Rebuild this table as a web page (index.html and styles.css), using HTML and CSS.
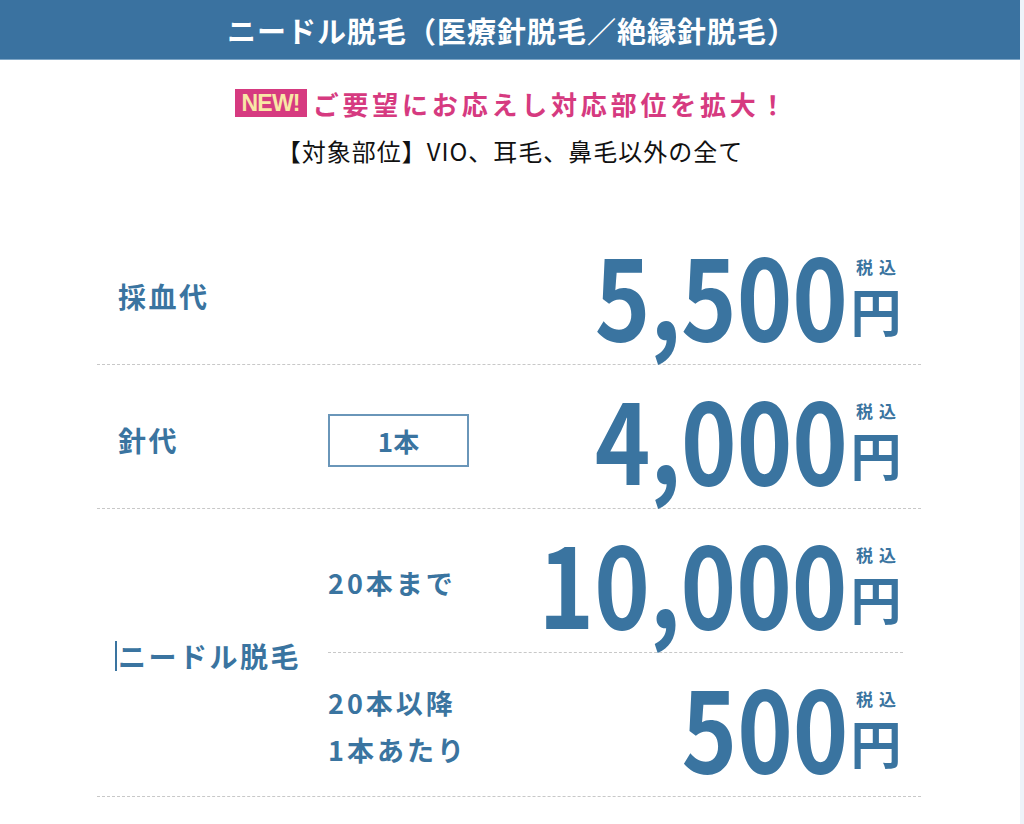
FILE: index.html
```html
<!DOCTYPE html>
<html lang="ja">
<head>
<meta charset="utf-8">
<link rel="stylesheet" href="styles.css">
</head>
<body>
<div class="page">
  <header class="title">ニードル脱毛（医療針脱毛／絶縁針脱毛）</header>
  <div class="intro">
    <p class="news"><span class="badge">NEW!</span><span class="news-text">ご要望にお応えし対応部位を拡大！</span></p>
    <p class="target">【対象部位】VIO、耳毛、鼻毛以外の全て</p>
  </div>
  <div class="table">
    <div class="row">
      <div class="label">採血代</div>
      <div class="cell">
        <div class="mid"></div>
        <div class="price"><span class="num">5,500</span><span class="unit"><span class="tax">税込</span><span class="yen">円</span></span></div>
      </div>
    </div>
    <div class="row">
      <div class="label">針代</div>
      <div class="cell">
        <div class="mid"><span class="box">1本</span></div>
        <div class="price"><span class="num">4,000</span><span class="unit"><span class="tax">税込</span><span class="yen">円</span></span></div>
      </div>
    </div>
    <div class="row">
      <div class="label"><span class="caret">ニードル脱毛</span></div>
      <div class="subs">
        <div class="cell sub">
          <div class="mid sublabel">20本まで</div>
          <div class="price"><span class="num">10,000</span><span class="unit"><span class="tax">税込</span><span class="yen">円</span></span></div>
        </div>
        <div class="cell sub">
          <div class="mid sublabel">20本以降<br>1本あたり</div>
          <div class="price"><span class="num">500</span><span class="unit"><span class="tax">税込</span><span class="yen">円</span></span></div>
        </div>
      </div>
    </div>
  </div>
</div>
</body>
</html>
```
FILE: styles.css
```css
html, body {
  margin: 0;
  padding: 0;
  background: #ffffff;
}
body {
  font-family: "Noto Sans CJK JP", "Noto Sans", sans-serif;
  color: #3a74a0;
}
.page {
  width: 1020px;
  min-height: 824px;
  background: #ffffff;
  border-right: 4px solid #eef3f9;
}
.title {
  height: 59px;
  background: #3a72a0;
  border-bottom: 1px solid #7fa6c6;
  color: #ffffff;
  font-size: 29px;
  font-weight: 700;
  letter-spacing: 1px;
  display: flex;
  align-items: center;
  justify-content: center;
  padding-left: 4px;
}
.intro {
  display: flex;
  flex-direction: column;
  align-items: center;
  padding-top: 26px;
}
.news {
  margin: 0;
  display: flex;
  align-items: center;
  gap: 6px;
  height: 34px;
  padding-left: 4px;
}
.badge {
  background: #d63a80;
  color: #f8e7a6;
  font-family: "Liberation Sans", sans-serif;
  font-weight: 700;
  font-size: 23px;
  line-height: 28px;
  height: 28px;
  padding: 0 7px;
  letter-spacing: -0.8px;
}
.news-text {
  color: #d63a80;
  font-size: 26px;
  font-weight: 700;
  letter-spacing: 3.8px;
}
.target {
  margin: 14px 0 0;
  color: #111111;
  font-size: 24px;
  line-height: 34px;
  letter-spacing: 1px;
}
.table {
  margin: 53px 99px 0 97px;
}
.row {
  display: grid;
  grid-template-columns: 231px 1fr;
  border-bottom: 1px dashed #c8c8c8;
}
.label {
  display: flex;
  align-items: center;
  padding-left: 21px;
  padding-top: 6px;
  font-size: 28px;
  font-weight: 700;
  letter-spacing: 2.5px;
}
.caret {
  border-left: 2px solid #3a74a0;
  margin-left: -3px;
  padding-left: 1px;
  line-height: 30px;
}
.cell {
  height: 143px;
  display: flex;
  align-items: center;
  justify-content: space-between;
  padding-right: 19px;
}
.subs .sub {
  margin-right: 18px;
  padding-right: 1px;
}
.subs .sub:first-child {
  border-bottom: 1px dashed #c8c8c8;
}
.box {
  display: flex;
  align-items: center;
  justify-content: center;
  width: 137px;
  height: 49px;
  margin-top: 7px;
  border: 2px solid #6a96b9;
  font-size: 26px;
  font-weight: 700;
}
.sublabel {
  font-size: 27px;
  font-weight: 700;
  line-height: 47px;
  letter-spacing: 3px;
  padding-top: 3px;
}
.price {
  display: flex;
  align-items: flex-end;
}
.num {
  display: inline-block;
  font-size: 111px;
  font-weight: 700;
  line-height: 1;
  transform: scaleX(0.85);
  transform-origin: right bottom;
}
.unit {
  display: flex;
  flex-direction: column;
  align-items: center;
  margin-left: 2px;
  margin-bottom: 12px;
}
.tax {
  font-size: 17px;
  font-weight: 700;
  letter-spacing: 6px;
  padding-left: 6px;
  line-height: 22px;
}
.yen {
  font-size: 51px;
  font-weight: 700;
  line-height: 52px;
  margin-top: 6px;
}
```
